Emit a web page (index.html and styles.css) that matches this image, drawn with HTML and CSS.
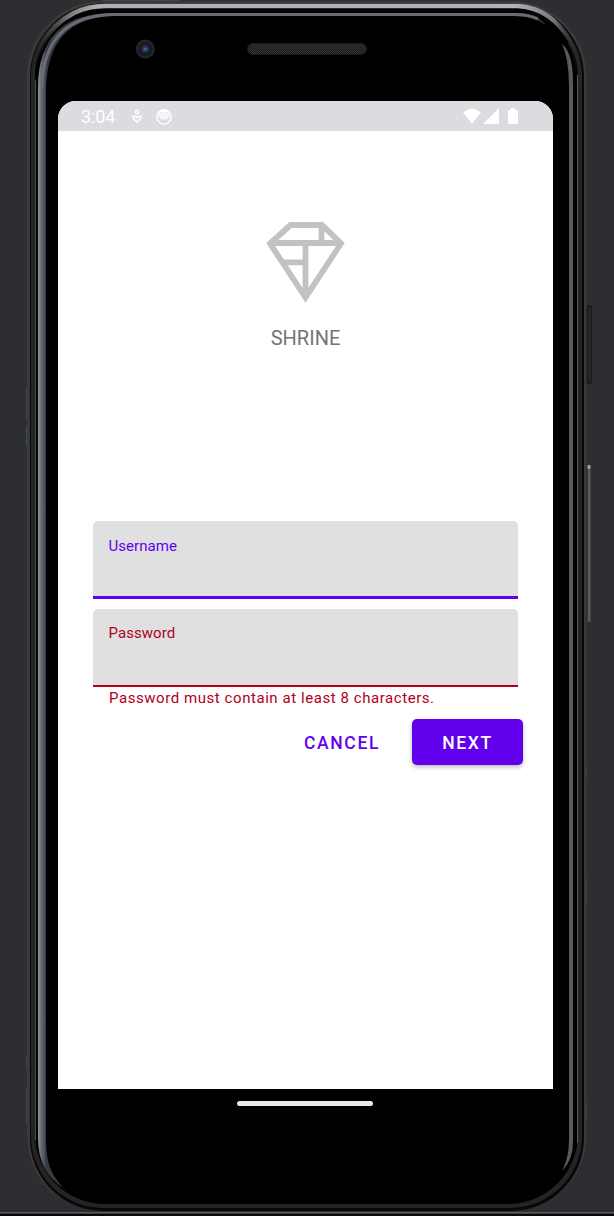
FILE: index.html
```
<!DOCTYPE html>
<html lang="en">
<head>
<meta charset="utf-8">
<title>Shrine</title>
<link rel="stylesheet" href="styles.css">
</head>
<body>
<div class="stage">
  <svg class="device" width="614" height="1216" viewBox="0 0 614 1216" aria-hidden="true">
    <defs>
      <linearGradient id="leftGlass" x1="38" x2="46" y1="0" y2="0" gradientUnits="userSpaceOnUse">
        <stop offset="0" stop-color="#929396"/><stop offset=".4" stop-color="#686b70"/><stop offset=".7" stop-color="#525861"/><stop offset="1" stop-color="#373c44"/>
      </linearGradient>
      <linearGradient id="topMetal" x1="36" x2="580" y1="0" y2="0" gradientUnits="userSpaceOnUse">
        <stop offset="0" stop-color="#555" stop-opacity="0"/><stop offset=".06" stop-color="#777"/><stop offset=".11" stop-color="#aeb1b4"/><stop offset=".88" stop-color="#b0b3b6"/><stop offset=".95" stop-color="#77797c"/><stop offset="1" stop-color="#333" stop-opacity="0"/>
      </linearGradient>
      <linearGradient id="volume" x1="586" x2="592" y1="0" y2="0" gradientUnits="userSpaceOnUse">
        <stop offset="0" stop-color="#111"/><stop offset=".5" stop-color="#666"/><stop offset="1" stop-color="#222"/>
      </linearGradient>
      <pattern id="mesh" width="2" height="2" patternUnits="userSpaceOnUse">
        <rect width="2" height="2" fill="#181919"/><path d="M0 0h1v1H0zM1 1h1v1H1z" fill="#343636"/>
      </pattern>
      <radialGradient id="lens"><stop offset="0" stop-color="#5b70a5"/><stop offset=".4" stop-color="#29375f"/><stop offset="1" stop-color="#11152b"/></radialGradient>
    </defs>
    <path d="M0 1212.8H614" stroke="#5b5b5d" stroke-width="1.8"/>
    <path d="M0 1215H614" stroke="#08080a" stroke-width="2.6"/>
    <path d="M102 .5h78" stroke="#40464a"/>
    <path d="M26.5 387v33M26.5 1057v13M26.5 1088v36M586.5 764v16M586.5 875v32M586.5 1100v22" stroke="#414448"/>
    <path d="M26.500 426v20" stroke="#34504f"/>
    <rect x="586" y="305" width="6" height="79" rx="2" fill="#1b1b1b"/>
    <rect x="588" y="307" width="3" height="75" rx="1" fill="#272522"/>
    <rect x="586.500" y="465" width="5" height="157" rx="2" fill="url(#volume)"/>
    <rect x="587.500" y="465" width="3" height="4" rx="1" fill="#a0a0a0"/>
    <rect x="27" y="1" width="559.500" height="1210" rx="75" ry="75" fill="#3a3838"/>
    <rect x="30" y="3.500" width="554" height="1207.500" rx="73" fill="#080808"/>
    <rect x="31" y="4" width="551" height="1204" rx="72" fill="#242424"/>
    <rect x="35" y="6.500" width="543" height="1197.500" rx="70" fill="#000"/>
    <path d="M35.500 80V1140" stroke="#4a4a4a"/>
    <path d="M33 90Q33 34 74 13Q88 6 106 6H518Q552 8 570 42Q579 60 579 88" fill="none" stroke="url(#topMetal)" stroke-width="4.500"/>
    <path d="M37 1130V90Q37 30 90 11Q100 9.500 112 10H516Q549 11 568 43" fill="none" stroke="#050505" stroke-width="2"/>
    <path d="M38 88Q38 13 113 13H516Q536 13 546 25Q533 16 514 16H116Q46 16 46 92V1142Q46 1172 64 1188Q38 1173 38 1138Z" fill="url(#leftGlass)"/>
    <path d="M113 14.500H514Q530 14.500 538 19M42 88Q43 16 113 14.500" fill="none" stroke="#696c73" stroke-width="3"/>
    <path d="M562 44Q573 53 573 82V1142Q573 1160 562 1171Q569 1158 569 1140V86Q569 59 562 44Z" fill="#5b5860"/>
    <path d="M577.500 75V1143" stroke="#55595a" stroke-width="1"/>
    <path d="M582.700 90V1140" stroke="#090909" stroke-width="1"/>
    <circle cx="145.300" cy="49" r="9.500" fill="#252525"/>
    <circle cx="145.300" cy="49" r="7" fill="#18191d"/>
    <circle cx="145.300" cy="49" r="5.300" fill="url(#lens)"/>
    <rect x="247.500" y="43.500" width="119" height="11" rx="5.500" fill="url(#mesh)" stroke="#1c1c1c"/>
  </svg>

  <main class="screen">
    <header class="status">
      <span class="clock">3:04</span>
      <svg class="care" width="12" height="16" viewBox="0 0 12 16"><circle cx="6" cy="3" r="1.700"/><path d="M6 13.200L2 9.200Q1.300 7.400 3 6.900Q4.600 6.700 6 8.700Q7.400 6.700 9 6.900Q10.700 7.400 10 9.200Z"/></svg>
      <svg class="cat" width="18" height="18" viewBox="0 0 18 18"><circle cx="9" cy="9" r="7.200" fill="none" stroke="#fff" stroke-width="1.500"/><path d="M3 4L5 5Q9 4 13 5L15 4L14.500 9Q13.500 11.500 9 11.500Q4.500 11.500 3.500 9Z" fill="#fff" opacity=".7"/><path d="M4 3.500Q9 0 14 3.500L12 4.500H6Z" fill="#fff"/></svg>
      <span class="spacer"></span>
      <svg class="signals" width="56" height="18" viewBox="0 0 56 18" fill="#fff"><path d="M0 4.500Q9-3.200 18 4.500L9 15.500ZM20 16L36 0V16ZM45 2H48V0H52V2H54Q55 2 55 3V15Q55 16 54 16H46Q45 16 45 15V3Q45 2 46 2Z"/></svg>
    </header>
    <section class="brand">
      <svg width="80" height="82" viewBox="0 0 80 82" fill="none" stroke="#c2c2c2" stroke-width="5.800"><path d="M4 21.500L24.500 3H56L75 21.500L39.500 75.500Z"/><path d="M4 21H75M55.500 3V21M39.500 21V76M18 40.300H39.500"/></svg>
      <h1>SHRINE</h1>
    </section>
    <form class="login">
      <div class="field username"><label>Username</label></div>
      <div class="field password"><label>Password</label></div>
      <p class="error">Password must contain at least 8 characters.</p>
      <div class="actions"><button type="button" class="cancel">CANCEL</button><button type="button" class="next">NEXT</button></div>
    </form>
  </main>
  <div class="home"></div>
</div>
</body>
</html>
```
FILE: styles.css
```
* { box-sizing: border-box; }
body { margin: 0; background: #2d2e32; font-family: Roboto, sans-serif; }
.stage { position: relative; width: 614px; height: 1216px; padding: 101px 61px 0 58px; overflow: hidden; }
.device { position: absolute; left: 0; top: 0; }
.screen { position: relative; height: 988px; overflow: hidden; background: #fff; border-radius: 18px 18px 0 0; }
.status { display: flex; align-items: center; height: 30px; padding: 0 34px 0 23px; background: #dbdce0; color: #fff; }
.clock { width: 50px; font-size: 18px; letter-spacing: -.1px; line-height: 30px; padding-top: 2px; }
.care { margin-top: 1px; fill: none; stroke: #fff; stroke-width: 1.5; }
.cat { margin: 1px 0 0 12px; }
.spacer { flex: 1; }
.signals { margin-top: 2px; }
.brand { display: flex; flex-direction: column; align-items: center; height: 390px; padding-top: 91px; }
.brand h1 { margin: 22px 0 0; color: #747474; font-size: 20px; font-weight: 400; line-height: 24px; }
.login { padding: 0 30px 0 35px; }
.field { width: 425px; height: 78px; padding: 15px 15.500px; background: #e0e0e0; border-radius: 5px 5px 0 0; }
.field label { display: block; font-size: 15px; line-height: 20px; letter-spacing: .05px; }
.username { border-bottom: 3px solid #6200ee; color: #6200ee; }
.password { margin-top: 10px; border-bottom: 2px solid #b00020; color: #b00020; padding-top: 14px; }
.error { margin: 0; padding-left: 16px; color: #b00020; font-size: 15px; line-height: 22px; letter-spacing: .56px; }
.actions { display: flex; justify-content: flex-end; gap: 10px; margin-top: 10px; }
.actions button { height: 46px; border: 0; border-radius: 5px; font: 500 17.500px/44px Roboto, sans-serif; letter-spacing: 1.650px; padding: 2px 0 0; }
.cancel { width: 120px; color: #6200ee; background: none; }
.next { width: 111px; color: #fff; background: #6200ee; box-shadow: 0 2px 4px rgba(0, 0, 0, .28); }
.home { position: relative; width: 136px; height: 5px; margin: 12px 0 0 179px; background: #e8e8e8; border-radius: 3px; }
```
